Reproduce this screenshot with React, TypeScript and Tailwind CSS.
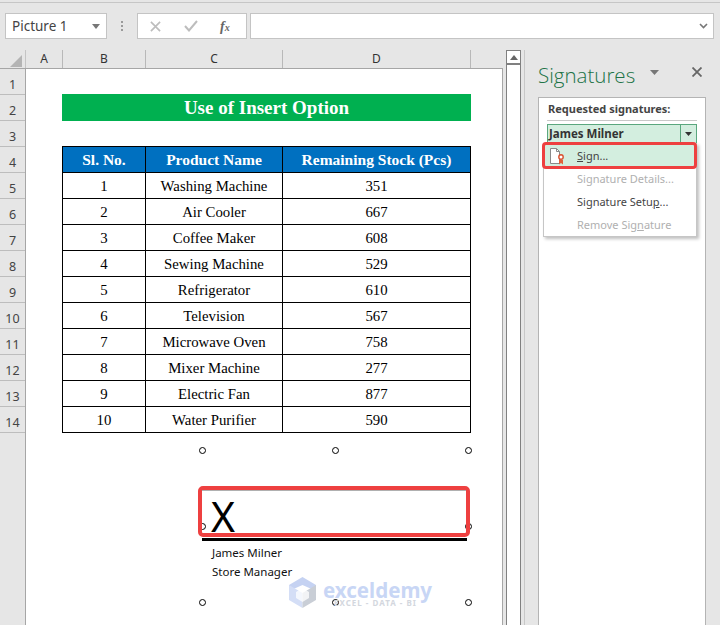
import React from "react";

const rows: [string, string, string][] = [
  ["1", "Washing Machine", "351"],
  ["2", "Air Cooler", "667"],
  ["3", "Coffee Maker", "608"],
  ["4", "Sewing Machine", "529"],
  ["5", "Refrigerator", "610"],
  ["6", "Television", "567"],
  ["7", "Microwave Oven", "758"],
  ["8", "Mixer Machine", "277"],
  ["9", "Electric Fan", "877"],
  ["10", "Water Purifier", "590"],
];

const rowNums = Array.from({ length: 14 }, (_, i) => i + 1);

function Handle({ className }: { className: string }) {
  return <div className={"absolute w-[7px] h-[7px] rounded-full border border-black bg-white " + className} />;
}

function SignIcon() {
  return (
    <svg width="15" height="18" viewBox="0 0 15 18" fill="none">
      <path d="M0.5 1.5H6.5L9.5 4.5V16.5H0.5Z" fill="#fff" stroke="#8a8a8a" />
      <path d="M6.5 1.5V4.5H9.5" stroke="#8a8a8a" />
      <circle cx="11" cy="10" r="2.2" fill="#fff" stroke="#d9502e" strokeWidth="1.4" />
      <path d="M9 13V17.5L11 16L13 17.5V13Z" fill="#e2603a" />
    </svg>
  );
}

export default function App() {
  return (
    <div className="w-[720px] h-[625px] bg-[#e6e6e6] overflow-hidden flex flex-col font-['Noto_Sans',sans-serif]">
      <div className="mt-[2px] h-px bg-[#c6c6c6]" />

      {/* Formula bar */}
      <div className="mt-[10px] h-[26px] flex pl-[5px] pr-[6px]">
        <div className="w-[102px] bg-white border border-[#c4c4c4] flex items-center justify-between pl-[6px] pr-[5px]">
          <span className="text-[13.5px] text-[#444] pt-[1px]">Picture 1</span>
          <svg width="9" height="5" viewBox="0 0 9 5"><path d="M0 0H8L4 5Z" fill="#777" /></svg>
        </div>
        <div className="w-[30px] flex flex-col items-center justify-center gap-[2px]">
          <div className="w-[2px] h-[2px] bg-[#9a9a9a]" />
          <div className="w-[2px] h-[2px] bg-[#9a9a9a]" />
          <div className="w-[2px] h-[2px] bg-[#9a9a9a]" />
        </div>
        <div className="w-[110px] bg-white border border-[#c4c4c4] flex items-center pl-[12px]">
          <svg width="11" height="11" viewBox="0 0 12 12" stroke="#bdbdbd" strokeWidth="1.8"><path d="M1 1L11 11M11 1L1 11" /></svg>
          <svg className="ml-[23px]" width="14" height="12" viewBox="0 0 14 12" fill="none" stroke="#bdbdbd" strokeWidth="2"><path d="M1 6L5 10.5L13 1" /></svg>
          <span className="ml-[22px] text-[14px] italic font-bold text-[#666] font-['Liberation_Serif',serif]">f<span className="text-[10px]">x</span></span>
        </div>
        <div className="ml-[3px] flex-1 bg-white border border-[#c4c4c4] flex items-center justify-end pr-[5px]">
          <svg width="9" height="6" viewBox="0 0 9 6" fill="none" stroke="#777" strokeWidth="1.6"><path d="M1 1L4.5 4.5L8 1" /></svg>
        </div>
      </div>

      <div className="mt-[11px] flex-1 flex min-h-0">
        {/* Spreadsheet */}
        <div className="w-[503px] flex flex-col shrink-0">
          <div className="h-[19px] flex shrink-0 border-b border-[#a6a6a6] text-[12px] text-[#333]">
            <div className="w-[26px] border-r border-[#c4c4c4] relative">
              <svg className="absolute right-[3px] bottom-[1px]" width="12" height="12" viewBox="0 0 12 12"><path d="M12 0V12H0Z" fill="#b4b4b4" /></svg>
            </div>
            <div className="w-[37px] border-r border-[#b8b8b8] text-center leading-[18px]">A</div>
            <div className="w-[83px] border-r border-[#b8b8b8] text-center leading-[18px]">B</div>
            <div className="w-[137px] border-r border-[#b8b8b8] text-center leading-[18px]">C</div>
            <div className="w-[188px] border-r border-[#b8b8b8] text-center leading-[18px]">D</div>
          </div>
          <div className="flex flex-1 min-h-0">
            <div className="w-[26px] shrink-0 border-r border-[#a6a6a6] text-[12.5px] text-[#444]">
              {rowNums.map((n) => (
                <div key={n} className="h-[26px] border-b border-[#bdbdbd] flex items-center justify-center pt-[8px]">{n}</div>
              ))}
            </div>
            <div className="flex-1 bg-white border-r border-[#a6a6a6] relative font-['Liberation_Serif',serif]">
              <div className="ml-[36px] mt-[25px] w-[409px] h-[27px] bg-[#00b050] text-white font-bold text-[19px] leading-[28px] text-center">
                Use of Insert Option
              </div>
              <table className="ml-[36px] mt-[25px] w-[408px] border-collapse table-fixed text-[14.8px] text-black">
                <colgroup>
                  <col className="w-[83px]" />
                  <col className="w-[137px]" />
                  <col className="w-[188px]" />
                </colgroup>
                <thead>
                  <tr className="h-[26px] bg-[#0070c0] text-white font-bold text-[15.5px]">
                    <th className="border border-black p-0">Sl. No.</th>
                    <th className="border border-black p-0">Product Name</th>
                    <th className="border border-black p-0">Remaining Stock (Pcs)</th>
                  </tr>
                </thead>
                <tbody>
                  {rows.map((r) => (
                    <tr key={r[0]} className="h-[26px] text-center">
                      <td className="border border-black p-0 pt-[2px]">{r[0]}</td>
                      <td className="border border-black p-0 pt-[2px]">{r[1]}</td>
                      <td className="border border-black p-0 pt-[2px]">{r[2]}</td>
                    </tr>
                  ))}
                </tbody>
              </table>

              {/* Signature picture */}
              <Handle className="left-[173px] top-[378px]" />
              <Handle className="left-[306px] top-[378px]" />
              <Handle className="left-[439px] top-[378px]" />
              <Handle className="left-[173px] top-[454px]" />
              <Handle className="left-[439px] top-[454px]" />
              <Handle className="left-[173px] top-[530px]" />
              <Handle className="left-[306px] top-[530px]" />
              <Handle className="left-[439px] top-[530px]" />
              <div className="absolute left-[176px] top-[469px] w-[265px] h-[3px] bg-black" />
              <div className="absolute left-[172px] top-[417px] w-[272px] h-[51px] rounded-[5px] border-[4px] border-[#ee4040]">
                <div className="h-px bg-[#b0b0b0]" />
              </div>
              <div className="absolute left-[185px] top-[422px] text-[41px] leading-[50px] text-black font-['Noto_Sans',sans-serif]">X</div>
              <div className="absolute left-[186px] top-[474px] text-[11.5px] leading-[19px] text-[#111] font-['Noto_Sans',sans-serif]">
                <div>James Milner</div>
                <div>Store Manager</div>
              </div>
              {/* Watermark */}
              <div className="absolute left-[263px] top-[508px] flex items-start gap-[7px]">
                <svg width="27" height="31" viewBox="0 0 27 31">
                  <path d="M13.5 0L27 8V14L13.5 8L0 14V8Z" fill="#c5d2f2" />
                  <path d="M0 8L13.5 16V31L0 23Z" fill="#d4def6" />
                  <path d="M27 8L13.5 16V31L27 23Z" fill="#c9ced6" />
                  <path d="M13.5 11L20 15V21L13.5 25L7 21V15Z" fill="#ffffff" fillOpacity="0.75" />
                </svg>
                <div className="flex flex-col font-['Noto_Sans',sans-serif]">
                  <div className="mt-[4px] text-[20.5px] leading-[19px] font-bold text-[#c8d6f5]">exceldemy</div>
                  <div className="ml-[11px] text-[8px] leading-[6px] tracking-[1px] font-bold text-[#d3d7de] whitespace-nowrap">EXCEL - DATA - BI</div>
                </div>
              </div>
            </div>
          </div>
        </div>

        {/* Vertical scrollbar */}
        <div className="ml-[3px] w-[15px] h-full shrink-0 bg-white border-x border-[#808080] flex flex-col">
          <div className="h-[15px] border-t border-b-2 border-[#808080] flex items-center justify-center">
            <svg width="8" height="5" viewBox="0 0 8 5"><path d="M4 0L8 5H0Z" fill="#666" /></svg>
          </div>
        </div>

        <div className="ml-[3px] w-px bg-[#c8c8c8] shrink-0" />

        {/* Signatures pane */}
        <div className="flex-1 flex flex-col pl-[13px] pr-[14px]">
          <div className="h-[47px] flex items-start">
            <span className="text-[20.5px] leading-[28px] mt-[11px] text-[#217346] font-light font-['Open_Sans',sans-serif]">Signatures</span>
            <svg className="ml-[15px] mt-[20px]" width="9" height="5" viewBox="0 0 9 5"><path d="M0 0H9L4.5 5Z" fill="#777" /></svg>
            <svg className="ml-[33px] mt-[17px]" width="10" height="10" viewBox="0 0 10 10" stroke="#666" strokeWidth="1.8"><path d="M0.5 0.5L9.5 9.5M9.5 0.5L0.5 9.5" /></svg>
          </div>
          <div className="flex-1 bg-white border border-[#b4b4b4] border-b-0 relative px-[8px]">
            <div className="h-[22px] mt-px border-b border-[#c8c8c8] text-[11px] font-bold text-[#444] leading-[20px] pl-px">Requested signatures:</div>
            <div className="mt-[3px] h-[20px] bg-[#d3eedf] border border-[#5aa77e] flex items-center text-[11.5px] font-bold text-[#333] pl-px">
              <span className="flex-1">James Milner</span>
              <div className="w-[16px] h-full border-l border-[#5aa77e] flex items-center justify-center">
                <svg width="7" height="4" viewBox="0 0 7 4"><path d="M0 0H7L3.5 4Z" fill="#333" /></svg>
              </div>
            </div>
            <div className="absolute left-[4px] top-[45px] w-[154px] h-[94px] bg-white border border-[#c6c6c6] shadow-[2px_2px_3px_rgba(0,0,0,0.25)] text-[11px] text-[#444]">
              <div className="h-[24px] flex items-center bg-[#d3eedf] pl-[6px] gap-[12px]">
                <SignIcon />
                <span><u>S</u>ign...</span>
              </div>
              <div className="h-[23px] flex items-center pl-[33px] text-[#b0b0b0]">Signature Details...</div>
              <div className="h-[23px] flex items-center pl-[33px]">Signature Setu<u>p</u>...</div>
              <div className="h-[23px] flex items-center pl-[33px] text-[#b0b0b0]">Remove Sig<u>n</u>ature</div>
            </div>
            <div className="absolute left-[3px] top-[44px] w-[155px] h-[27px] rounded-[4px] border-[3px] border-[#ee4040]" />
          </div>
        </div>
      </div>
    </div>
  );
}
